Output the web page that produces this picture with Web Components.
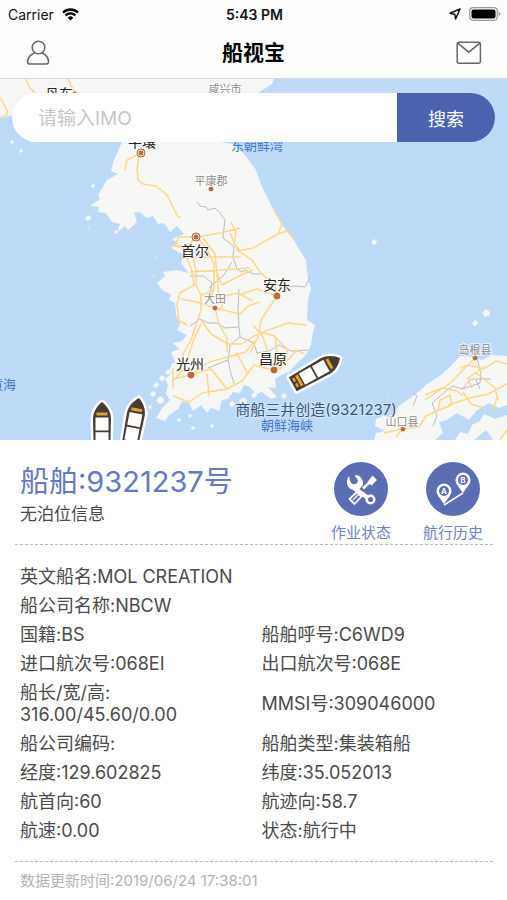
<!DOCTYPE html>
<html lang="zh-CN">
<head>
<meta charset="utf-8">
<meta name="viewport" content="width=device-width, initial-scale=1">
<title>船视宝</title>
<style>
  body {
    margin: 0;
    background: #fff;
    color: #4a4a4a;
    font-family: Inter, "Noto Sans CJK SC", sans-serif;
  }
</style>
</head>
<body>
<ship-app>
  <status-bar slot="top" carrier="Carrier" time="5:43 PM"></status-bar>
  <nav-bar slot="top">船视宝</nav-bar>
  <ship-map slot="map">
    <search-box placeholder="请输入IMO">搜索</search-box>
  </ship-map>
  <ship-summary heading="船舶:9321237号" note="无泊位信息">
    <round-action icon="tools">作业状态</round-action>
    <round-action icon="route">航行历史</round-action>
  </ship-summary>
  <ship-details updated="数据更新时间:2019/06/24 17:38:01">
    <ship-field label="英文船名" wide>MOL CREATION</ship-field>
    <ship-field label="船公司名称" wide>NBCW</ship-field>
    <ship-field label="国籍">BS</ship-field>
    <ship-field label="船舶呼号">C6WD9</ship-field>
    <ship-field label="进口航次号">068EI</ship-field>
    <ship-field label="出口航次号">068E</ship-field>
    <ship-field label="船长/宽/高"><br>316.00/45.60/0.00</ship-field>
    <ship-field label="MMSI号">309046000</ship-field>
    <ship-field label="船公司编码"></ship-field>
    <ship-field label="船舶类型">集装箱船</ship-field>
    <ship-field label="经度">129.602825</ship-field>
    <ship-field label="纬度">35.052013</ship-field>
    <ship-field label="航首向">60</ship-field>
    <ship-field label="航迹向">58.7</ship-field>
    <ship-field label="航速">0.00</ship-field>
    <ship-field label="状态">航行中</ship-field>
  </ship-details>
</ship-app>

<script>
/**
 * Shared base: renders the html getter into an open shadow root.
 */
class ShipElement extends HTMLElement {
  constructor() {
    super();
    this.template = document.createElement("template");
    this.attachShadow({ mode: "open" });
  }
  connectedCallback() {
    this.template.innerHTML = this.html;
    this.shadowRoot.innerHTML = "";
    this.shadowRoot.appendChild(this.template.content.cloneNode(true));
  }
  attr(name) {
    return this.getAttribute(name) || "";
  }
}

/**
 * `ship-app`
 * page frame: bars, map, then the ship panel
 */
class ShipApp extends ShipElement {
  get html() {
    return `
<style>
:host {
  display: flex;
  flex-direction: column;
  min-height: 100vh;
}
header {
  background: #fdfdfd;
  border-bottom: 1px solid #d8d8d8;
}
</style>
<header><slot name="top"></slot></header>
<slot name="map"></slot>
<main><slot></slot></main>`;
  }
}
customElements.define("ship-app", ShipApp);

/**
 * `status-bar`
 * carrier, clock and battery
 */
class StatusBar extends ShipElement {
  get html() {
    return `
<style>
:host {
  display: grid;
  grid-template-columns: 1fr auto 1fr;
  align-items: center;
  height: 28px;
  padding: 0 6px 0 8px;
  color: #111;
  font-size: 14px;
}
div {
  display: flex;
  align-items: center;
  gap: 8px;
}
.end {
  justify-content: flex-end;
}
time {
  font-weight: 600;
}
</style>
<div>
  <span>${this.attr("carrier")}</span>
  <svg width="17" height="13" viewBox="0 0 17 13" fill="none" stroke="#000" stroke-width="2.3">
    <path d="M1 4.6a10.6 10.6 0 0 1 15 0M3.6 7.4a6.9 6.9 0 0 1 9.8 0"/>
    <path d="M8.500 12.500L5.700 9.700a4 4 0 0 1 5.600 0z" fill="#000" stroke="none"/>
  </svg>
</div>
<time>${this.attr("time")}</time>
<div class="end">
  <svg width="12" height="12" viewBox="0 0 12 12" fill="none" stroke="#111" stroke-width="1.500" stroke-linejoin="round">
    <path d="M11 1L1 5.300l4.800.9L6.600 11z"/>
  </svg>
  <svg width="32" height="14" viewBox="0 0 32 14">
    <rect x=".7" y=".7" width="27.600" height="12.600" rx="3.500" fill="none" stroke="#999" stroke-width="1.200"/>
    <rect x="2.500" y="2.500" width="24" height="9" rx="2" fill="#000"/>
    <path d="M29.600 4.800v4.400q1.800-.8 1.800-2.200t-1.800-2.200z" fill="#999"/>
  </svg>
</div>`;
  }
}
customElements.define("status-bar", StatusBar);

/**
 * `nav-bar`
 * title between the profile and message buttons
 */
class NavBar extends ShipElement {
  get html() {
    return `
<style>
:host {
  display: flex;
  align-items: center;
  justify-content: space-between;
  height: 50px;
  padding: 0 20px;
}
h1 {
  margin: 0;
  color: #000;
  font-size: 21px;
  line-height: 28px;
  font-weight: 700;
}
button {
  display: grid;
  place-items: center;
  width: 36px;
  height: 36px;
  padding: 0;
  border: 0;
  background: none;
}
svg {
  fill: none;
  stroke: #666;
  stroke-width: 1.500;
}
</style>
<button aria-label="我的">
  <svg width="24" height="26" viewBox="0 0 24 26">
    <circle cx="12.500" cy="7.500" r="6.300"/>
    <path d="M8.600 13C4.500 14.800 1.500 18 1.500 21.800q0 2.200 2 2.200h17q2 0 2-2.200c0-3.800-2.500-7-6.300-8.800"/>
  </svg>
</button>
<h1><slot></slot></h1>
<button aria-label="消息">
  <svg width="26" height="24" viewBox="0 0 26 24">
    <rect x="1.200" y="1.200" width="23.200" height="21" rx="2"/>
    <path d="M1.800 2.200l11 9 11-9"/>
  </svg>
</button>`;
  }
}
customElements.define("nav-bar", NavBar);

/**
 * `search-box`
 * pill shaped IMO search
 */
class SearchBox extends ShipElement {
  get html() {
    return `
<style>
:host {
  display: block;
}
form {
  display: flex;
  height: 49px;
  border-radius: 25px;
  overflow: hidden;
  background: #fff;
}
input {
  flex: 1;
  min-width: 0;
  padding: 2px 26px 0;
  border: 0;
  outline: 0;
  background: none;
  color: #333;
  font: inherit;
  font-size: 19px;
}
input::placeholder {
  color: #c6c6ca;
}
button {
  width: 98px;
  padding: 0;
  border: 0;
  background: #4b63af;
  color: #fff;
  font: inherit;
  font-size: 18px;
}
</style>
<form onsubmit="return false">
  <input type="search" aria-label="IMO" placeholder="${this.attr("placeholder")}">
  <button><slot></slot></button>
</form>`;
  }
}
customElements.define("search-box", SearchBox);

/**
 * `ship-map`
 * the sea chart with its ships, and a slot for what floats on top
 */
class ShipMap extends ShipElement {
  get html() {
    // x, y, text, class
    const places = [
      [59, 99, "丹东", "city"],
      [225, 93, "咸兴市", "minor"],
      [142, 147, "平壤", "city"],
      [257, 150, "东朝鲜湾", "sea"],
      [211, 185, "平康郡", "minor"],
      [195, 256, "首尔", "city"],
      [215, 303, "大田", "minor"],
      [277, 290, "安东", "city"],
      [190, 369, "光州", "city"],
      [273, 364, "昌原", "city"],
      [475, 354, "岛根县", "minor"],
      [402, 426, "山口县", "minor"],
      [3, 389, "黄海", "sea"],
      [287, 430, "朝鲜海峡", "sea"],
    ];
    // x, y, radius
    const dots = [
      [141, 153, 4], [196, 237, 4], [211, 189, 2], [277, 296, 3], [215, 308, 2],
      [191, 375, 3], [274, 370, 3], [475, 358, 2], [403, 429, 2], [75, 94, 2],
    ];
    const islets = [
      [93, 186, 2], [88, 218, 3], [89, 229, 1], [12, 142, 2], [21, 151, 2], [157, 257, 1],
      [154, 276, 1], [374, 242, 3], [486, 313, 4], [475, 323, 3], [162, 378, 3], [156, 385, 3],
      [153, 394, 3], [160, 400, 4], [150, 407, 2], [190, 416, 2], [193, 428, 2], [212, 426, 2],
      [232, 404, 3], [243, 401, 4], [284, 396, 3], [388, 397, 1], [173, 365, 2], [168, 372, 3],
      [120, 227, 2], [179, 420, 2], [146, 415, 2], [254, 395, 3], [116, 232, 2],
    ];
    return `
<style>
:host {
  display: grid;
}
svg, .over {
  grid-area: 1 / 1;
}
svg {
  display: block;
  width: 100%;
}
.over {
  padding: 14px 12px;
}
.land { fill: #f6f6f5; }
.water { fill: #bddbf8; }
.road { fill: none; stroke: #fbd888; stroke-width: 1.500; stroke-linejoin: round; }
.border { fill: none; stroke: #b9bcc2; stroke-width: 1; }
text {
  text-anchor: middle;
  paint-order: stroke;
  stroke: #fff;
  stroke-width: 2px;
  stroke-opacity: .7;
}
.city { font-size: 14px; fill: #222; }
.minor { font-size: 11px; fill: #8d8d8d; }
.sea { font-size: 13px; fill: #3f78c4; stroke-opacity: 0; }
.ship { font-size: 15px; fill: #3d5380; stroke-opacity: .3; }
</style>
<svg viewBox="0 79 507 361" role="img" aria-label="地图">
  <defs>
    <g id="vessel">
      <path d="M0 0C5 4 9 10 9 17L8 54H-8L-9 17C-9 10-5 4 0 0z" fill="#fff" stroke="#fff" stroke-width="5" stroke-linejoin="round"/>
      <path d="M0 0C5 4 9 10 9 17L8 54H-8L-9 17C-9 10-5 4 0 0z" fill="#453c32"/>
      <path d="M-5.500 10.500H5.500V13.500H-5.500zM-6 45H6V48H-6zM-5 49.500H-1V52H-5zM1 49.500H5V52H1z" fill="#dfa034"/>
      <path d="M-6.500 15.500H6.500V28.500H-6.500zM-6.500 30.300H6.500V43.500H-6.500z" fill="#fff"/>
    </g>
  </defs>
  <rect class="water" y="79" width="507" height="361"/>
  <path class="land" d="M0 79H274L272 84 258 93 235 105 215 125 220 142 233 144 245 155 256 170 262 187 271 205 282 225 293 239 302 254 306 260 308 280 311 288 308 300 307 320 315 325 312 337 311 345 306 355 296 364 289 372 281 375 275 379 276 388 268 387 277 397 271 399 262 392 256 394 250 387 244 385 240 393 233 392 228 399 222 400 219 411 211 408 207 413 201 405 193 411 189 403 182 401 178 409 169 415 165 421 156 418 163 407 170 400 166 394 168 385 165 379 171 374 170 368 175 362 171 352 179 349 173 343 182 341 187 335 177 330 180 324 176 315 175 303 169 300 171 294 163 291 157 283 165 276 163 272 177 270 189 273 181 263 184 255 171 248 178 243 172 239 184 234 177 226 170 232 164 223 158 224 153 216 147 218 139 212 134 213 137 222 128 230 125 226 118 232 120 224 112 222 106 213 98 212 99 207 90 206 100 199 98 195 107 180 118 174 111 171 114 160 122 142 132 125 105 110 60 108 30 102 12 115 0 119z"/>
  <path class="land" d="M374 440L376 433 385 431 375 426 376 419 383 416 390 417 400 405 416 394 427 384 441 375 452 365 460 356 472 357 482 360 492 355 507 356V405L499 408 489 403 476 411 469 420 457 413 447 420 439 422 443 433 435 440zM455 440L460 432 468 434 472 425 480 421 484 414 495 419 507 415V440H493L486 430 474 440z"/>
  <g class="land">${islets.map(([x, y, r]) => `<path d="M${x - r} ${y}l${r} ${-r} ${r} ${r - 1} -1 ${r} ${-r} 1z"/>`).join("")}</g>
  <path class="border" d="M197 202l3 4 6 1 2 3 7-2 5 5 5 7-1 8-1 10 7 5 4 4-1 10 4 12 5 3 3-2 8 4 10 0 9 9 12 4 13-1 8 1 5-9M190 276l14 0 8 7-2 13M232 262l-8 13-15 13M190 326l10-7 8 4 9 0 8 5 14-1-1-18 1-20M239 327l1 10-10 8-2 15-20 8M228 360l3 14 4 12M240 337l14 6 3 10 12-2 10-6 12 6 17-1M413 406l4-10-4-3M433 426l4-10-5-13 14-12 7-5 9 3 9-10 20 0M462 389l18-6 1-12M480 371l-3-13M480 389l-4-9"/>
  <path class="road" d="M141 153l-14 7-2 10M140 153l-3 15 1 12 5 4 13 2 11 9 6 12 5 10 3 0M26 79l4 9 6 6M68 79l7 15M0 97l7 13 0 5-7 3M75 94l-3-7"/>
  <path class="road" d="M196 237l-9 10-12-2 4-8 17 0 24-4 20-5M231 222l5 10-2 12 6 6M172 245l11 3 9 23 2 14-14 8-3 12 2 16 8 4M196 237l10 10 8 17 0 25-4 10M203 238l12 16 3 30 1 15M184 257h57M190 272l60-4M193 257l3 14 0 14 5 10 0 15-10 30-8 14-3 18M196 271l20 0 6 14 19-10 12-5M214 290l-12 5M230 233l8 18 15-3 25-14 4-10-8-14M278 234l9-3 8 9M237 250l15 10 8 12 15 14 2 10-16 24-2 12M215 308l-18-6-16-3M215 308l6 2 3-14 14-3 15 8M215 308l4 16 8 14 0 14M215 308l25 6 8-8 12-4M201 320l10 14 17 10 14 0 12-8 12-5 22-8 19 2M242 294l15-5 20 7M191 375l-18 4M191 375l18-13 19-5 18-5 8-11M173 368v20M172 382l12-13 10-30 7-15M191 375l20-6 16 20M173 396l16 6 13-9 25-4 15-8 12-16 19 5M207 374l2 22M236 352l12 22M259 335l-9 18M253 325l10 12 11 33M260 332l15 4 4 34M274 370l12-8 11-12 7 4M274 370l-15-3M276 338l12 12-8 20"/>
  <path class="road" d="M384 433l18-4 17-2 7-11 16-7 10-4-2-10-10 5-2 10M425 400l24-16 16-16 10-10M425 395l17-7 15 3 6 5M448 405l22-7 18-4 19-10M460 368l8-3 16 4 12-8 11 3M463 392l8 12 13 4M472 388l-4-10 17-12M475 372l20 16 3 12M500 440l7-10M403 429l-7 8M497 398l-5 14"/>
  ${dots.map(([x, y, r]) => `<circle cx="${x}" cy="${y}" r="${r}" fill="#cf6428" stroke="#a46d50"/>${r > 3 ? `<circle cx="${x}" cy="${y}" r="3" fill="none" stroke="#fbe7d8"/>` : ""}`).join("")}
  ${places.map(([x, y, name, kind]) => `<text class="${kind}" x="${x}" y="${y}">${name}</text>`).join("")}
  <use href="#vessel" transform="translate(102 402)"/>
  <use href="#vessel" transform="translate(139 398) rotate(11)"/>
  <use href="#vessel" transform="translate(340 358) rotate(61)"/>
  <text class="ship" x="316" y="415">商船三井创造(9321237)</text>
</svg>
<div class="over"><slot></slot></div>`;
  }
}
customElements.define("ship-map", ShipMap);

/**
 * `round-action`
 * round icon button with its caption below
 */
class RoundAction extends ShipElement {
  get icons() {
    return {
      tools: `
<path d="M20 26L37 38" stroke="#fff" stroke-width="4.500"/>
<path d="M14.500 14.500C11 20 13.500 27.500 20 28L25 27.500 29 23C29.500 18 27 13.500 21.500 13L21 14.500C24 17 25 19.500 22.500 21.500 19 24 15.500 20.500 15.500 15z" fill="#fff"/>
<circle cx="36.500" cy="37.500" r="3.800" fill="#5b6db3" stroke="#fff" stroke-width="2.600"/>
<path d="M29 26.500L36 20" stroke="#fff" stroke-width="2.500"/>
<path d="M33.500 20L38.500 13.500 43 18 37.500 23.500z" fill="#fff"/>
<path d="M15.500 37L23 30 27.500 34.500 20.500 42z" fill="none" stroke="#fff" stroke-width="1.800" stroke-linejoin="round"/>
<path d="M19 38L24.500 32.500" stroke="#fff" stroke-width="1.500"/>`,
      route: `
<path d="M18 43L37 31" stroke="#fff" stroke-width="1.500"/>
<path d="M18 42C14 36 10.500 33 10.500 29a7.500 7.500 0 0 1 15 0C25.500 33 22 36 18 42z" fill="#fff"/>
<path d="M37 31C33 25 29.500 22 29.500 18a7.500 7.500 0 0 1 15 0C44.500 22 41 25 37 31z" fill="#fff"/>
<circle cx="18" cy="29" r="5" fill="#5b6db3"/>
<circle cx="37" cy="18" r="5" fill="#5b6db3"/>
<text x="18" y="32">A</text>
<text x="37" y="21">B</text>`,
    };
  }
  get html() {
    return `
<style>
:host {
  display: block;
}
button {
  display: flex;
  flex-direction: column;
  align-items: center;
  gap: 6px;
  padding: 0;
  border: 0;
  background: none;
  color: #6f80c1;
  font: inherit;
  font-size: 15px;
  line-height: 22px;
}
text {
  fill: #fff;
  font-size: 8px;
  font-weight: 600;
  text-anchor: middle;
}
</style>
<button>
  <svg width="54" height="54" viewBox="0 0 54 54">
    <circle cx="27" cy="27" r="27" fill="#5b6db3"/>
    ${this.icons[this.attr("icon")]}
  </svg>
  <span><slot></slot></span>
</button>`;
  }
}
customElements.define("round-action", RoundAction);

/**
 * `ship-summary`
 * ship number, berth note and the actions
 */
class ShipSummary extends ShipElement {
  get html() {
    return `
<style>
:host {
  display: flex;
  justify-content: space-between;
  margin: 0 14px 0 15px;
  padding: 22px 10px 0 5px;
  border-bottom: 1px dashed #bbb;
}
h2 {
  margin: 0;
  color: #6479c0;
  font-size: 29px;
  line-height: 39px;
  font-weight: 400;
}
p {
  margin: 0;
  font-size: 17px;
  line-height: 26px;
}
.actions {
  display: flex;
  gap: 32px;
}
</style>
<div>
  <h2>${this.attr("heading")}</h2>
  <p>${this.attr("note")}</p>
</div>
<div class="actions"><slot></slot></div>`;
  }
}
customElements.define("ship-summary", ShipSummary);

/**
 * `ship-details`
 * two column list of fields and the update time
 */
class ShipDetails extends ShipElement {
  get html() {
    return `
<style>
:host {
  display: block;
  margin: 0 14px 0 15px;
}
section {
  display: grid;
  grid-template-columns: 1fr 1fr;
  align-items: center;
  gap: 7px 10px;
  padding: 21px 0 19px 5px;
  border-bottom: 1px dashed #bbb;
}
footer {
  padding: 8px 5px;
  color: #b4b4b4;
  font-size: 15px;
  line-height: 22px;
}
</style>
<section><slot></slot></section>
<footer>${this.attr("updated")}</footer>`;
  }
}
customElements.define("ship-details", ShipDetails);

/**
 * `ship-field`
 * one label:value pair
 */
class ShipField extends ShipElement {
  get html() {
    return `
<style>
:host {
  display: block;
  font-size: 18px;
  line-height: 22px;
}
:host([wide]) {
  grid-column: 1 / -1;
}
</style>
${this.attr("label")}:<slot></slot>`;
  }
}
customElements.define("ship-field", ShipField);
</script>
</body>
</html>
